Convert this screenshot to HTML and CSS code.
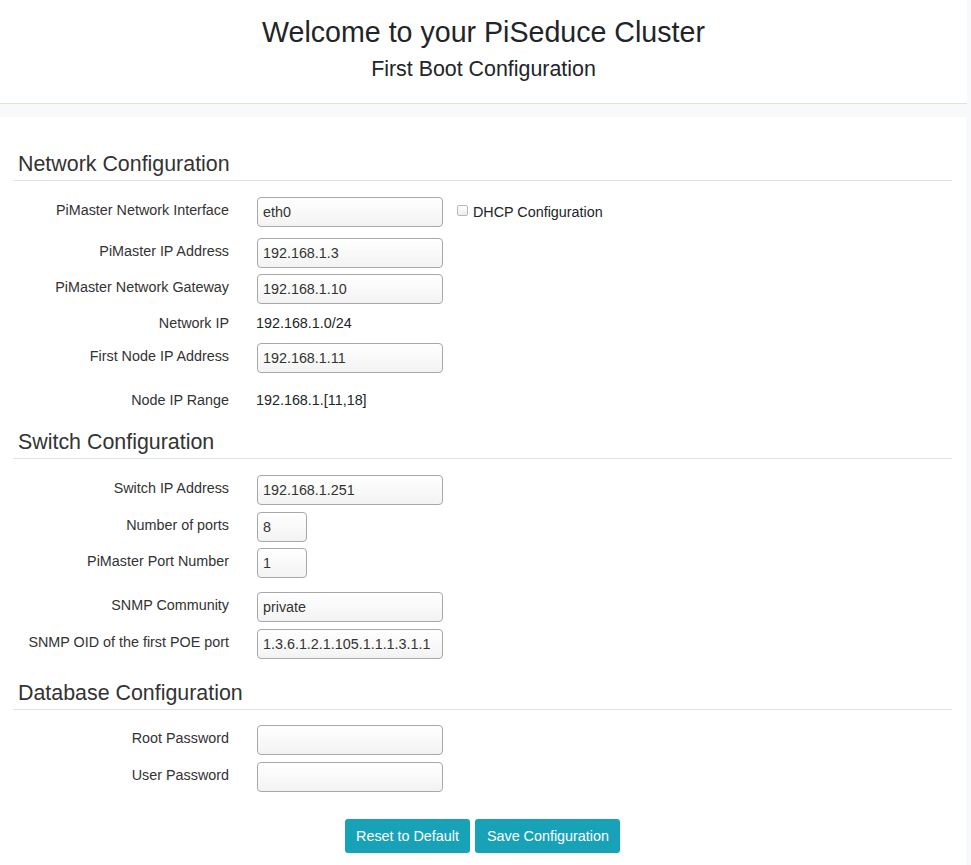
FILE: index.html
```html
<!DOCTYPE html>
<html lang="en">
<head>
<meta charset="utf-8">
<title>PiSeduce - First Boot Configuration</title>
<link rel="stylesheet" href="styles.css">
</head>
<body>
<header class="header">
  <h1 class="title">Welcome to your PiSeduce Cluster</h1>
  <p class="subtitle">First Boot Configuration</p>
</header>
<main class="main">
  <form class="form">
    <section class="section section--first">
      <h2 class="section-title">Network Configuration</h2>
      <div class="row row--first">
        <label class="label">PiMaster Network Interface</label>
        <div class="field">
          <input class="input" type="text" value="eth0">
          <label class="check"><input class="checkbox" type="checkbox">DHCP Configuration</label>
        </div>
      </div>
      <div class="row row--loose">
        <label class="label">PiMaster IP Address</label>
        <div class="field"><input class="input" type="text" value="192.168.1.3"></div>
      </div>
      <div class="row row--tight">
        <label class="label">PiMaster Network Gateway</label>
        <div class="field"><input class="input" type="text" value="192.168.1.10"></div>
      </div>
      <div class="row row--text">
        <span class="label label--text">Network IP</span>
        <span class="value">192.168.1.0/24</span>
      </div>
      <div class="row row--mid">
        <label class="label">First Node IP Address</label>
        <div class="field"><input class="input" type="text" value="192.168.1.11"></div>
      </div>
      <div class="row row--far">
        <span class="label label--text">Node IP Range</span>
        <span class="value">192.168.1.[11,18]</span>
      </div>
    </section>

    <section class="section">
      <h2 class="section-title">Switch Configuration</h2>
      <div class="row row--first">
        <label class="label">Switch IP Address</label>
        <div class="field"><input class="input" type="text" value="192.168.1.251"></div>
      </div>
      <div class="row">
        <label class="label">Number of ports</label>
        <div class="field"><input class="input input--small" type="text" value="8"></div>
      </div>
      <div class="row row--tight">
        <label class="label">PiMaster Port Number</label>
        <div class="field"><input class="input input--small" type="text" value="1"></div>
      </div>
      <div class="row row--wide">
        <label class="label">SNMP Community</label>
        <div class="field"><input class="input" type="text" value="private"></div>
      </div>
      <div class="row">
        <label class="label">SNMP OID of the first POE port</label>
        <div class="field"><input class="input" type="text" value="1.3.6.1.2.1.105.1.1.1.3.1.1"></div>
      </div>
    </section>

    <section class="section section--db">
      <h2 class="section-title">Database Configuration</h2>
      <div class="row row--first-db">
        <label class="label">Root Password</label>
        <div class="field"><input class="input" type="password" value=""></div>
      </div>
      <div class="row">
        <label class="label">User Password</label>
        <div class="field"><input class="input" type="password" value=""></div>
      </div>
    </section>

    <div class="actions">
      <button class="btn" type="button">Reset to Default</button>
      <button class="btn" type="submit">Save Configuration</button>
    </div>
  </form>
</main>
</body>
</html>
```
FILE: styles.css
```css
html, body {
  margin: 0;
  padding: 0;
}

body {
  background: #f8f9fa;
  font-family: "Liberation Sans", Arial, sans-serif;
  font-size: 14.35px;
  color: #333;
}

.header {
  background: #fff;
  margin-right: 4px;
  padding: 15px 0 21px;
  border-bottom: 1px solid #dee2e6;
  text-align: center;
}

.title {
  margin: 0;
  font-size: 28.6px;
  line-height: 34px;
  font-weight: 400;
  color: #212529;
}

.subtitle {
  margin: 7px 0 0;
  font-size: 21.4px;
  line-height: 26px;
  color: #212529;
}

.main {
  background: #fff;
  margin: 13px 5px 0 0;
  padding: 34px 14px 12px 13px;
  min-height: calc(100vh - 117px - 46px);
}

.section {
  margin-top: 19px;
}

.section--first {
  margin-top: 0;
}

.section--db {
  margin-top: 21px;
}

.section-title {
  margin: 0;
  padding: 0 0 3px 5px;
  font-size: 21.4px;
  line-height: 26px;
  font-weight: 400;
  color: #333;
  border-bottom: 1px solid #dee2e6;
}

.row {
  display: flex;
  align-items: flex-start;
  margin-top: 7px;
}

.row--first {
  margin-top: 16px;
}

.row--first-db {
  margin-top: 15px;
}

.row--tight {
  margin-top: 6px;
}

.row--loose {
  margin-top: 11px;
}

.row--mid {
  margin-top: 10px;
}

.row--wide {
  margin-top: 14px;
}

.row--text {
  margin-top: 9px;
}

.row--far {
  margin-top: 17px;
}

.label {
  flex: 0 0 216px;
  width: 216px;
  text-align: right;
  line-height: 20px;
  padding-top: 3px;
  margin-right: 28px;
  color: #333;
}

.label--text {
  padding-top: 0;
}

.value {
  line-height: 20px;
  color: #212529;
  margin-left: -1px;
}

.field {
  display: flex;
  align-items: flex-start;
}

.input {
  box-sizing: border-box;
  width: 186px;
  height: 30px;
  margin: 0;
  padding: 0 5px;
  border: 1px solid #a8a8a8;
  border-radius: 4px;
  background: linear-gradient(#ffffff, #f3f3f3);
  font-family: "Liberation Sans", Arial, sans-serif;
  font-size: 14.35px;
  color: #333;
  outline: none;
}

.input--small {
  width: 50px;
}

.check {
  display: flex;
  align-items: flex-start;
  margin-left: 14px;
  padding-top: 5px;
  line-height: 20px;
  color: #212529;
}

.checkbox {
  appearance: none;
  -webkit-appearance: none;
  box-sizing: border-box;
  width: 11px;
  height: 11px;
  margin: 3px 5px 0 0;
  border: 1px solid #b8b8b8;
  border-radius: 2px;
  background: linear-gradient(#ffffff, #ededed);
}

.actions {
  display: flex;
  justify-content: center;
  gap: 5px;
  margin-top: 27px;
}

.btn {
  height: 34px;
  padding: 0 11.5px;
  border: 0;
  border-radius: 3px;
  background: #17a2b8;
  color: #fff;
  font-family: "Liberation Sans", Arial, sans-serif;
  font-size: 14.35px;
  line-height: 34px;
  cursor: pointer;
}
```
